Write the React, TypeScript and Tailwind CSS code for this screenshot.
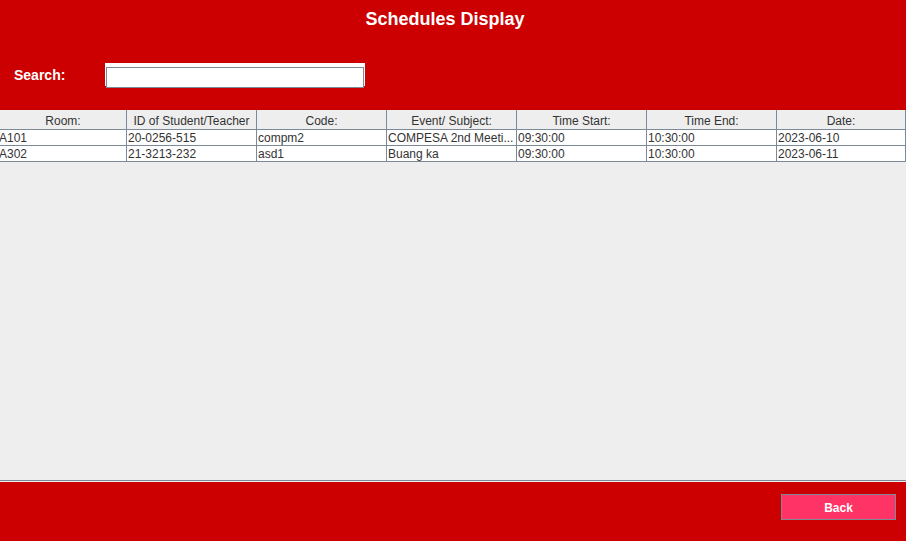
const columns = [
  "Room:",
  "ID of Student/Teacher",
  "Code:",
  "Event/ Subject:",
  "Time Start:",
  "Time End:",
  "Date:",
];

const rows = [
  ["A101", "20-0256-515", "compm2", "COMPESA 2nd Meeti...", "09:30:00", "10:30:00", "2023-06-10"],
  ["A302", "21-3213-232", "asd1", "Buang ka", "09:30:00", "10:30:00", "2023-06-11"],
];

export default function App() {
  return (
    <div className="w-[906px] h-[541px] flex flex-col overflow-hidden font-['Liberation_Sans',Arial,sans-serif]">
      {/* top panel */}
      <div className="h-[110px] bg-[#cc0000] flex flex-col">
        <div className="h-[36px] pt-[2px] pr-[16px] flex items-center justify-center text-white font-bold text-[18px]">
          Schedules Display
        </div>
        <div className="mt-[27px] flex items-center h-[23px]">
          <span className="w-[105px] pl-[14px] pt-[2px] text-white font-bold text-[14px]">Search:</span>
          <div className="w-[260px] h-[23px] border border-white bg-white">
            <input className="w-full h-full border border-[#7a8a99] bg-white outline-none text-[12px] px-1" />
          </div>
        </div>
      </div>

      {/* table */}
      <div className="flex-1 bg-[#eeeeee] text-[12px] text-[#333333]">
        <div className="grid grid-cols-[127px_130px_130px_130px_130px_130px_129px] h-[20px] bg-[#eeeeee] border-b border-[#7a8a99]">
          {columns.map((c) => (
            <div key={c} className="border-r border-[#7a8a99] flex items-center justify-center leading-none pt-[3px]">
              {c}
            </div>
          ))}
        </div>
        {rows.map((r, i) => (
          <div
            key={i}
            className="grid grid-cols-[127px_130px_130px_130px_130px_130px_129px] h-[16px] bg-white border-b border-[#7a8a99]"
          >
            {r.map((v, j) => (
              <div
                key={j}
                className={`border-r border-[#7a8a99] flex items-center leading-none whitespace-nowrap overflow-hidden pt-[1px] ${
                  j === 0 ? "-ml-[1px]" : "pl-[1px]"
                }`}
              >
                {v}
              </div>
            ))}
          </div>
        ))}
      </div>

      {/* bottom panel */}
      <div className="h-[2px] border-t border-[#7a8a99] bg-[#eeeeee]" />
      <div className="h-[59px] bg-[#cc0000] flex justify-end items-start pt-[12px] pr-[10px]">
        <button className="w-[115px] h-[26px] pt-[1px] bg-[#ff3366] border border-[#7a8a99] text-white font-bold text-[12px]">
          Back
        </button>
      </div>
    </div>
  );
}
